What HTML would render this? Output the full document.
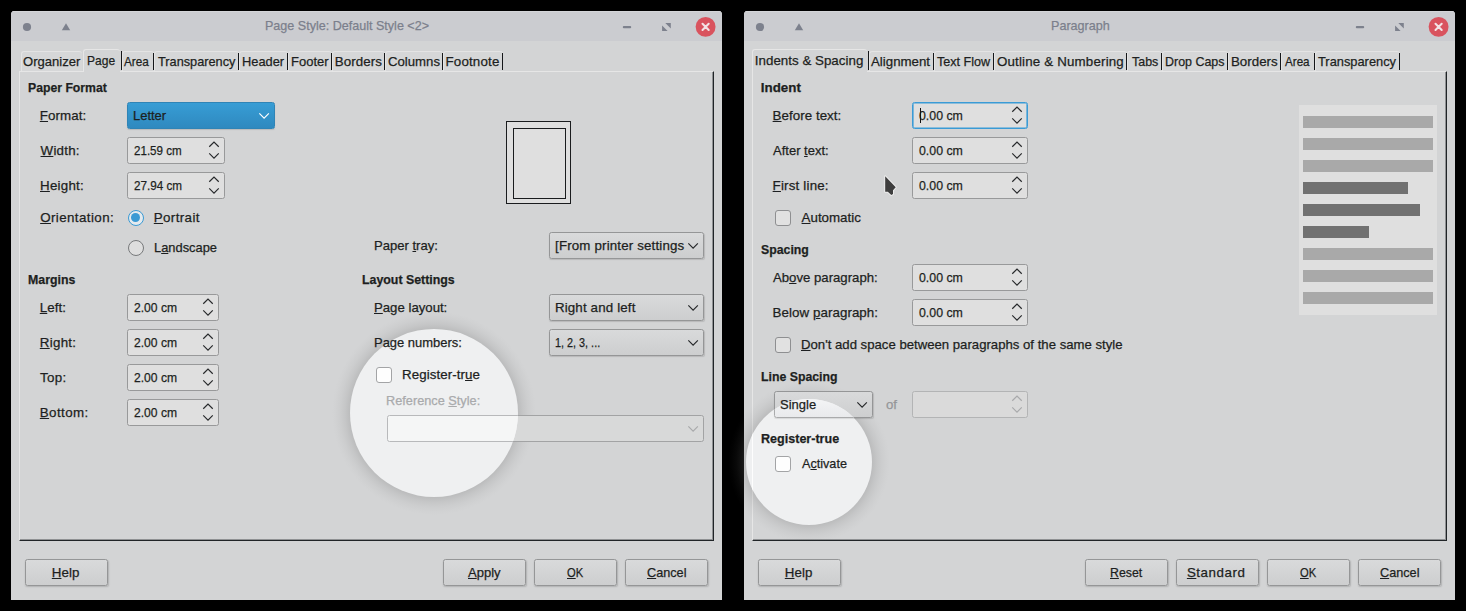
<!DOCTYPE html>
<html><head><meta charset="utf-8"><title>Dialogs</title>
<style>
html,body{margin:0;padding:0}
body{width:1466px;height:611px;background:#000;position:relative;overflow:hidden;font-family:"Liberation Sans",sans-serif;font-size:13.33px}
.t{position:absolute;white-space:nowrap;z-index:5;transform-origin:0 0;-webkit-text-stroke:0.25px currentColor}
.t u{text-decoration:underline;text-decoration-thickness:1px;text-underline-offset:1.2px}
.win{position:absolute;top:11px;width:711px;height:589px;background:#d3d4d5;border-radius:3.5px 3.5px 0 0;overflow:hidden;z-index:0}
.tb{height:30px;background:#cbccd0;box-shadow:inset 0 1px 0 #d4d5d8}
div{box-sizing:border-box}
.panel{position:absolute;z-index:1;border-top:1px solid #e6e6e6;border-left:1px solid #e6e6e6;border-right:1px solid #202427;border-bottom:1px solid #202427;box-shadow:inset -1px -1px 0 rgba(32,36,39,0.38)}
.halo{position:absolute;z-index:2;border-radius:50%}
.spot{position:absolute;z-index:4;border-radius:50%;background:#eff0f1;overflow:hidden}
.chk.lit{background:#fefefe;border-color:#a3a4a6}
.combo.lit{border-color:#aaabac;background:linear-gradient(#f7f8f9,#e9eaec);box-shadow:0.5px 1px 1px rgba(0,0,0,0.10)}
.combo.dis.lit{background:#f5f6f6;border-color:#b8b9bb;box-shadow:none}
.vline{position:absolute;background:#fdfdfd}
.tab{position:absolute;z-index:3;border-top:1px solid #e4e4e4;border-left:1px solid #e4e4e4;border-radius:3px 3px 0 0;background:#d6d7d8}
.tab:after{content:"";position:absolute;right:0;top:1px;bottom:1px;width:1px;background:#15171a}
.tab.nl:after{display:none}
.tab.sel{background:#d3d4d5;border-top:1px solid #e6e6e6;border-left:1px solid #e6e6e6;z-index:4}
.tab.sel:after{top:1px;bottom:2px;width:1.2px;right:-1.8px}
.spin{position:absolute;z-index:3;background:#dfdfdf;border:1px solid #98999a;border-radius:2.5px}
.spin.foc{border-color:#3a9bd6;box-shadow:inset 0 0 0 0.6px #3a9bd6}
.spin.dis{background:#dadada;border-color:#b3b4b5}
.combo{position:absolute;z-index:3;border:1px solid #959697;border-radius:2.5px;background:linear-gradient(#d9dadb,#cdcecf);box-shadow:0.5px 1px 1px rgba(0,0,0,0.13)}
.combo.blue{border-color:#2f84b6;background:linear-gradient(#379dd5,#2f89bf);box-shadow:0 1px 1px rgba(0,0,0,0.12)}
.combo.dis{background:#d8d9d9;border-color:#a2a3a4;box-shadow:none}
.btn{position:absolute;z-index:3;border:1px solid #959697;border-radius:2.5px;background:linear-gradient(#d9dadb,#cdcecf);box-shadow:0.5px 1px 1.5px rgba(0,0,0,0.16)}
.chk{position:absolute;z-index:3;border:1px solid #8e8f91;border-radius:3px;background:#e1e1e1}
.radio{position:absolute;z-index:3;width:16px;height:16px;border-radius:50%;border:1px solid #77797b;background:#dedede}
.radio.on{border:1.3px solid #3a9ad4;background:#e4eaee}
.radio.on:after{content:"";position:absolute;left:2.1px;top:2.1px;width:9.2px;height:9.2px;border-radius:50%;background:#3a9ad4}
.pv1,.pv2{position:absolute;z-index:3;border:1px solid #1a1c1e;background:#dfdfdf}
.ppv{position:absolute;z-index:3;background:#dfdfdf}
.bar{position:absolute;z-index:4;background:#a9a9a9}
.bar.d{background:#717171}
.caret{position:absolute;z-index:6;width:1.6px;height:15px;background:#111}
svg.ov{position:absolute;left:0;top:0;z-index:7;pointer-events:none}
</style></head>
<body>
<div class="win" style="left:11px"><div class="tb"></div></div>
<div class="panel" style="left:19px;top:71px;width:695px;height:470px;"></div>
<div class="halo" style="left:331.9px;top:310.9px;width:204.2px;height:204.2px;background:radial-gradient(circle closest-side, rgba(120,120,120,0) 81.39%, rgba(120,120,120,0.27) 81.88%, rgba(120,120,120,0.26) 82.37%, rgba(120,120,120,0.15) 87.27%, rgba(120,120,120,0.07) 92.16%, rgba(120,120,120,0.02) 97.06%, rgba(120,120,120,0) 100%)"></div>
<div class="spot" style="left:349.9px;top:328.9px;width:168.2px;height:168.2px"><div style="position:absolute;left:-349.9px;top:-328.9px;width:0;height:0"><div class="chk lit" style="left:376px;top:367px;width:16px;height:16px"></div><div class="combo dis lit" style="left:387px;top:415px;width:317px;height:27px"></div></div></div>
<div class="tab nl" style="left:21px;top:51px;width:61px;height:20px;"></div>
<span class="t" style="left:23.18px;top:55.13px;font-size:13.33px;line-height:13.33px;letter-spacing:0.000px;color:#1d1f21;transform:scaleX(0.9784);">Organizer</span>
<div class="tab sel" style="left:83px;top:49px;width:37px;height:23px;"></div>
<span class="t" style="left:86.81px;top:54.13px;font-size:13.33px;line-height:13.33px;letter-spacing:0.000px;color:#1d1f21;transform:scaleX(0.9022);">Page</span>
<div class="tab" style="left:122px;top:51px;width:32px;height:20px;"></div>
<span class="t" style="left:124.38px;top:55.13px;font-size:13.33px;line-height:13.33px;letter-spacing:0.000px;color:#1d1f21;transform:scaleX(0.8840);">Area</span>
<div class="tab" style="left:154px;top:51px;width:85px;height:20px;"></div>
<span class="t" style="left:157.91px;top:55.13px;font-size:13.33px;line-height:13.33px;letter-spacing:0.000px;color:#1d1f21;transform:scaleX(0.9557);">Transparency</span>
<div class="tab" style="left:239px;top:51px;width:49px;height:20px;"></div>
<span class="t" style="left:241.95px;top:55.13px;font-size:13.33px;line-height:13.33px;letter-spacing:0.000px;color:#1d1f21;transform:scaleX(0.9633);">Header</span>
<div class="tab" style="left:288px;top:51px;width:44px;height:20px;"></div>
<span class="t" style="left:290.93px;top:55.13px;font-size:13.33px;line-height:13.33px;letter-spacing:0.000px;color:#1d1f21;transform:scaleX(0.9743);">Footer</span>
<div class="tab" style="left:332px;top:51px;width:53px;height:20px;"></div>
<span class="t" style="left:334.71px;top:55.13px;font-size:13.33px;line-height:13.33px;letter-spacing:0.107px;color:#1d1f21;">Borders</span>
<div class="tab" style="left:385px;top:51px;width:58px;height:20px;"></div>
<span class="t" style="left:388.03px;top:55.13px;font-size:13.33px;line-height:13.33px;letter-spacing:0.000px;color:#1d1f21;transform:scaleX(0.9882);">Columns</span>
<div class="tab" style="left:443px;top:51px;width:60px;height:20px;"></div>
<span class="t" style="left:445.51px;top:55.13px;font-size:13.33px;line-height:13.33px;letter-spacing:0.172px;color:#1d1f21;">Footnote</span>
<span class="t" style="left:264.97px;top:19.13px;font-size:13.33px;line-height:13.33px;letter-spacing:0.000px;color:#7b7f8c;transform:scaleX(0.9420);">Page Style: Default Style &lt;2&gt;</span>
<span class="t" style="left:27.78px;top:81.13px;font-size:13.33px;line-height:13.33px;letter-spacing:0.000px;color:#1d1f21;font-weight:bold;transform:scaleX(0.9178);">Paper Format</span>
<span class="t" style="left:39.81px;top:109.13px;font-size:13.33px;line-height:13.33px;letter-spacing:0.089px;color:#1d1f21;"><u>F</u>ormat:</span>
<div class="combo blue" style="left:127px;top:102px;width:148px;height:27px;"></div>
<span class="t" style="left:132.94px;top:109.13px;font-size:13.33px;line-height:13.33px;letter-spacing:0.000px;color:#1d1f21;transform:scaleX(0.9721);">Letter</span>
<span class="t" style="left:40.54px;top:144.13px;font-size:13.33px;line-height:13.33px;letter-spacing:0.250px;color:#1d1f21;"><u>W</u>idth:</span>
<div class="spin" style="left:127px;top:137px;width:98px;height:27px;"></div>
<span class="t" style="left:133.82px;top:144.13px;font-size:13.33px;line-height:13.33px;letter-spacing:0.000px;color:#1d1f21;transform:scaleX(0.8697);">21.59 cm</span>
<span class="t" style="left:40.01px;top:179.13px;font-size:13.33px;line-height:13.33px;letter-spacing:0.254px;color:#1d1f21;"><u>H</u>eight:</span>
<div class="spin" style="left:127px;top:172px;width:98px;height:27px;"></div>
<span class="t" style="left:133.81px;top:179.13px;font-size:13.33px;line-height:13.33px;letter-spacing:0.000px;color:#1d1f21;transform:scaleX(0.8772);">27.94 cm</span>
<span class="t" style="left:40.17px;top:211.13px;font-size:13.33px;line-height:13.33px;letter-spacing:0.423px;color:#1d1f21;"><u>O</u>rientation:</span>
<div class="radio on" style="left:128px;top:210px"></div>
<span class="t" style="left:153.81px;top:211.13px;font-size:13.33px;line-height:13.33px;letter-spacing:0.382px;color:#1d1f21;"><u>P</u>ortrait</span>
<div class="radio" style="left:128px;top:240px"></div>
<span class="t" style="left:153.84px;top:241.13px;font-size:13.33px;line-height:13.33px;letter-spacing:0.000px;color:#1d1f21;transform:scaleX(0.9651);">L<u>a</u>ndscape</span>
<span class="t" style="left:27.78px;top:273.13px;font-size:13.33px;line-height:13.33px;letter-spacing:0.000px;color:#1d1f21;font-weight:bold;transform:scaleX(0.9250);">Margins</span>
<span class="t" style="left:39.81px;top:301.13px;font-size:13.33px;line-height:13.33px;letter-spacing:0.060px;color:#1d1f21;"><u>L</u>eft:</span>
<div class="spin" style="left:127px;top:294px;width:92px;height:27px;"></div>
<span class="t" style="left:133.79px;top:301.13px;font-size:13.33px;line-height:13.33px;letter-spacing:0.000px;color:#1d1f21;transform:scaleX(0.9080);">2.00 cm</span>
<span class="t" style="left:39.81px;top:336.13px;font-size:13.33px;line-height:13.33px;letter-spacing:0.289px;color:#1d1f21;"><u>R</u>ight:</span>
<div class="spin" style="left:127px;top:329px;width:92px;height:27px;"></div>
<span class="t" style="left:133.79px;top:336.13px;font-size:13.33px;line-height:13.33px;letter-spacing:0.000px;color:#1d1f21;transform:scaleX(0.9080);">2.00 cm</span>
<span class="t" style="left:40.10px;top:371.13px;font-size:13.33px;line-height:13.33px;letter-spacing:0.330px;color:#1d1f21;">Top:</span>
<div class="spin" style="left:127px;top:364px;width:92px;height:27px;"></div>
<span class="t" style="left:133.79px;top:371.13px;font-size:13.33px;line-height:13.33px;letter-spacing:0.000px;color:#1d1f21;transform:scaleX(0.9080);">2.00 cm</span>
<span class="t" style="left:39.81px;top:406.13px;font-size:13.33px;line-height:13.33px;letter-spacing:0.420px;color:#1d1f21;"><u>B</u>ottom:</span>
<div class="spin" style="left:127px;top:399px;width:92px;height:27px;"></div>
<span class="t" style="left:133.79px;top:406.13px;font-size:13.33px;line-height:13.33px;letter-spacing:0.000px;color:#1d1f21;transform:scaleX(0.9080);">2.00 cm</span>
<div class="pv1" style="left:506px;top:121px;width:65px;height:83px;"></div>
<div class="pv2" style="left:513px;top:128px;width:53px;height:71px;"></div>
<span class="t" style="left:373.83px;top:239.13px;font-size:13.33px;line-height:13.33px;letter-spacing:0.000px;color:#1d1f21;transform:scaleX(0.9798);">Paper <u>t</u>ray:</span>
<div class="combo" style="left:549px;top:232px;width:155px;height:27px;"></div>
<span class="t" style="left:555.05px;top:239.13px;font-size:13.33px;line-height:13.33px;letter-spacing:0.154px;color:#1d1f21;">[From printer settings</span>
<span class="t" style="left:361.97px;top:273.13px;font-size:13.33px;line-height:13.33px;letter-spacing:0.000px;color:#1d1f21;font-weight:bold;transform:scaleX(0.9274);">Layout Settings</span>
<span class="t" style="left:373.82px;top:301.13px;font-size:13.33px;line-height:13.33px;letter-spacing:0.000px;color:#1d1f21;transform:scaleX(0.9890);"><u>P</u>age layout:</span>
<div class="combo" style="left:549px;top:294px;width:155px;height:27px;"></div>
<span class="t" style="left:554.91px;top:301.13px;font-size:13.33px;line-height:13.33px;letter-spacing:0.150px;color:#1d1f21;">Right and left</span>
<span class="t" style="left:373.84px;top:336.13px;font-size:13.33px;line-height:13.33px;letter-spacing:0.000px;color:#1d1f21;transform:scaleX(0.9716);">Pa<u>g</u>e numbers:</span>
<div class="combo" style="left:549px;top:329px;width:155px;height:27px;"></div>
<span class="t" style="left:555.17px;top:336.13px;font-size:13.33px;line-height:13.33px;letter-spacing:0.000px;color:#1d1f21;transform:scaleX(0.8126);">1, 2, 3, ...</span>
<div class="chk" style="left:376px;top:367px;width:16px;height:16px;"></div>
<span class="t" style="left:402.11px;top:368.13px;font-size:13.33px;line-height:13.33px;letter-spacing:0.062px;color:#1d1f21;">Register-tr<u>u</u>e</span>
<span class="t" style="left:386.45px;top:394.13px;font-size:13.33px;line-height:13.33px;letter-spacing:0.000px;color:#a9aaac;transform:scaleX(0.9558);">Reference <u>S</u>tyle:</span>
<div class="combo dis" style="left:387px;top:415px;width:317px;height:27px;"></div>
<div class="btn" style="left:25px;top:559px;width:83px;height:27px;"></div>
<span class="t" style="left:51.81px;top:566.13px;font-size:13.33px;line-height:13.33px;letter-spacing:0.035px;color:#1d1f21;"><u>H</u>elp</span>
<div class="btn" style="left:443px;top:559px;width:83px;height:27px;"></div>
<span class="t" style="left:468.17px;top:566.13px;font-size:13.33px;line-height:13.33px;letter-spacing:0.000px;color:#1d1f21;transform:scaleX(0.9780);"><u>A</u>pply</span>
<div class="btn" style="left:534px;top:559px;width:83px;height:27px;"></div>
<span class="t" style="left:567.07px;top:566.13px;font-size:13.33px;line-height:13.33px;letter-spacing:0.000px;color:#1d1f21;transform:scaleX(0.8377);"><u>O</u>K</span>
<div class="btn" style="left:625px;top:559px;width:83px;height:27px;"></div>
<span class="t" style="left:646.76px;top:566.13px;font-size:13.33px;line-height:13.33px;letter-spacing:0.000px;color:#1d1f21;transform:scaleX(0.9505);"><u>C</u>ancel</span>
<div class="win" style="left:744px"><div class="tb"></div></div>
<div class="panel" style="left:752px;top:71px;width:695px;height:470px;"></div>
<div class="halo" style="left:728px;top:381.2px;width:162px;height:162px;background:radial-gradient(circle closest-side, rgba(120,120,120,0) 76.54%, rgba(120,120,120,0.27) 77.16%, rgba(120,120,120,0.26) 77.78%, rgba(120,120,120,0.15) 83.95%, rgba(120,120,120,0.07) 90.12%, rgba(120,120,120,0.02) 96.30%, rgba(120,120,120,0) 100%)"></div>
<div class="spot" style="left:746px;top:399.2px;width:126px;height:126px"><div style="position:absolute;left:-746px;top:-399.2px;width:0;height:0"><div class="vline" style="left:752px;top:380px;width:1px;height:160px"></div><div class="combo lit" style="left:774px;top:391px;width:99px;height:27px"></div><div class="chk lit" style="left:775px;top:456px;width:16px;height:16px"></div></div></div>
<div class="tab sel" style="left:752px;top:49px;width:115px;height:23px;"></div>
<span class="t" style="left:754.87px;top:54.13px;font-size:13.33px;line-height:13.33px;letter-spacing:0.016px;color:#1d1f21;">Indents &amp; Spacing</span>
<div class="tab" style="left:869px;top:51px;width:65px;height:20px;"></div>
<span class="t" style="left:870.57px;top:55.13px;font-size:13.33px;line-height:13.33px;letter-spacing:0.000px;color:#1d1f21;transform:scaleX(0.9962);">Alignment</span>
<div class="tab" style="left:934px;top:51px;width:60px;height:20px;"></div>
<span class="t" style="left:937.42px;top:55.13px;font-size:13.33px;line-height:13.33px;letter-spacing:0.000px;color:#1d1f21;transform:scaleX(0.9430);">Text Flow</span>
<div class="tab" style="left:994px;top:51px;width:133px;height:20px;"></div>
<span class="t" style="left:996.97px;top:55.13px;font-size:13.33px;line-height:13.33px;letter-spacing:0.172px;color:#1d1f21;">Outline &amp; Numbering</span>
<div class="tab" style="left:1127px;top:51px;width:35px;height:20px;"></div>
<span class="t" style="left:1131.72px;top:55.13px;font-size:13.33px;line-height:13.33px;letter-spacing:0.000px;color:#1d1f21;transform:scaleX(0.9339);">Tabs</span>
<div class="tab" style="left:1162px;top:51px;width:66px;height:20px;"></div>
<span class="t" style="left:1165.08px;top:55.13px;font-size:13.33px;line-height:13.33px;letter-spacing:0.000px;color:#1d1f21;transform:scaleX(0.9338);">Drop Caps</span>
<div class="tab" style="left:1228px;top:51px;width:53px;height:20px;"></div>
<span class="t" style="left:1230.91px;top:55.13px;font-size:13.33px;line-height:13.33px;letter-spacing:0.024px;color:#1d1f21;">Borders</span>
<div class="tab" style="left:1281px;top:51px;width:34px;height:20px;"></div>
<span class="t" style="left:1285.28px;top:55.13px;font-size:13.33px;line-height:13.33px;letter-spacing:0.000px;color:#1d1f21;transform:scaleX(0.8734);">Area</span>
<div class="tab" style="left:1315px;top:51px;width:85px;height:20px;"></div>
<span class="t" style="left:1318.31px;top:55.13px;font-size:13.33px;line-height:13.33px;letter-spacing:0.000px;color:#1d1f21;transform:scaleX(0.9631);">Transparency</span>
<span class="t" style="left:1050.67px;top:19.13px;font-size:13.33px;line-height:13.33px;letter-spacing:0.000px;color:#7b7f8c;transform:scaleX(0.9442);">Paragraph</span>
<span class="t" style="left:760.71px;top:81.13px;font-size:13.33px;line-height:13.33px;letter-spacing:0.044px;color:#1d1f21;font-weight:bold;">Indent</span>
<span class="t" style="left:772.61px;top:109.13px;font-size:13.33px;line-height:13.33px;letter-spacing:0.042px;color:#1d1f21;"><u>B</u>efore text:</span>
<div class="spin foc" style="left:912px;top:102px;width:116px;height:27px;"></div>
<span class="t" style="left:918.92px;top:109.13px;font-size:13.33px;line-height:13.33px;letter-spacing:0.000px;color:#1d1f21;transform:scaleX(0.9245);">0.00 cm</span>
<div class="caret" style="left:919.8px;top:108.3px"></div>
<span class="t" style="left:773.27px;top:144.13px;font-size:13.33px;line-height:13.33px;letter-spacing:0.000px;color:#1d1f21;transform:scaleX(0.9755);">After <u>t</u>ext:</span>
<div class="spin" style="left:912px;top:137px;width:116px;height:27px;"></div>
<span class="t" style="left:918.92px;top:144.13px;font-size:13.33px;line-height:13.33px;letter-spacing:0.000px;color:#1d1f21;transform:scaleX(0.9245);">0.00 cm</span>
<span class="t" style="left:772.61px;top:179.13px;font-size:13.33px;line-height:13.33px;letter-spacing:0.188px;color:#1d1f21;"><u>F</u>irst line:</span>
<div class="spin" style="left:912px;top:172px;width:116px;height:27px;"></div>
<span class="t" style="left:918.92px;top:179.13px;font-size:13.33px;line-height:13.33px;letter-spacing:0.000px;color:#1d1f21;transform:scaleX(0.9245);">0.00 cm</span>
<div class="chk" style="left:775px;top:210px;width:16px;height:16px;"></div>
<span class="t" style="left:801.57px;top:211.13px;font-size:13.33px;line-height:13.33px;letter-spacing:0.004px;color:#1d1f21;"><u>A</u>utomatic</span>
<span class="t" style="left:760.95px;top:243.13px;font-size:13.33px;line-height:13.33px;letter-spacing:0.000px;color:#1d1f21;font-weight:bold;transform:scaleX(0.9222);">Spacing</span>
<span class="t" style="left:773.27px;top:271.13px;font-size:13.33px;line-height:13.33px;letter-spacing:0.000px;color:#1d1f21;transform:scaleX(0.9879);">Ab<u>o</u>ve paragraph:</span>
<div class="spin" style="left:912px;top:264px;width:116px;height:27px;"></div>
<span class="t" style="left:918.92px;top:271.13px;font-size:13.33px;line-height:13.33px;letter-spacing:0.000px;color:#1d1f21;transform:scaleX(0.9245);">0.00 cm</span>
<span class="t" style="left:772.61px;top:306.13px;font-size:13.33px;line-height:13.33px;letter-spacing:0.060px;color:#1d1f21;">Below <u>p</u>aragraph:</span>
<div class="spin" style="left:912px;top:299px;width:116px;height:27px;"></div>
<span class="t" style="left:918.92px;top:306.13px;font-size:13.33px;line-height:13.33px;letter-spacing:0.000px;color:#1d1f21;transform:scaleX(0.9245);">0.00 cm</span>
<div class="chk" style="left:775px;top:337px;width:16px;height:16px;"></div>
<span class="t" style="left:800.82px;top:338.13px;font-size:13.33px;line-height:13.33px;letter-spacing:0.000px;color:#1d1f21;transform:scaleX(0.9875);"><u>D</u>on&#x27;t add space between paragraphs of the same style</span>
<span class="t" style="left:760.78px;top:370.13px;font-size:13.33px;line-height:13.33px;letter-spacing:0.000px;color:#1d1f21;font-weight:bold;transform:scaleX(0.9228);">Line Spacing</span>
<div class="combo" style="left:774px;top:391px;width:99px;height:27px;"></div>
<span class="t" style="left:780.41px;top:398.13px;font-size:13.33px;line-height:13.33px;letter-spacing:0.000px;color:#1d1f21;transform:scaleX(0.9749);">Single</span>
<span class="t" style="left:886.35px;top:398.13px;font-size:13.33px;line-height:13.33px;letter-spacing:0.000px;color:#959698;transform:scaleX(0.9914);">of</span>
<div class="spin dis" style="left:912px;top:391px;width:116px;height:27px;"></div>
<span class="t" style="left:760.76px;top:432.13px;font-size:13.33px;line-height:13.33px;letter-spacing:0.000px;color:#1d1f21;font-weight:bold;transform:scaleX(0.9423);">Register-true</span>
<div class="chk" style="left:775px;top:456px;width:16px;height:16px;"></div>
<span class="t" style="left:801.58px;top:457.13px;font-size:13.33px;line-height:13.33px;letter-spacing:0.000px;color:#1d1f21;transform:scaleX(0.9475);">A<u>c</u>tivate</span>
<div class="ppv" style="left:1299px;top:105px;width:138px;height:210px;"></div>
<div class="bar" style="left:1303px;top:116px;width:130px;height:12px;"></div>
<div class="bar" style="left:1303px;top:138px;width:130px;height:12px;"></div>
<div class="bar" style="left:1303px;top:160px;width:130px;height:12px;"></div>
<div class="bar d" style="left:1303px;top:182px;width:105px;height:12px;"></div>
<div class="bar d" style="left:1303px;top:204px;width:117px;height:12px;"></div>
<div class="bar d" style="left:1303px;top:226px;width:66px;height:12px;"></div>
<div class="bar" style="left:1303px;top:248px;width:130px;height:12px;"></div>
<div class="bar" style="left:1303px;top:270px;width:130px;height:12px;"></div>
<div class="bar" style="left:1303px;top:292px;width:130px;height:12px;"></div>
<div class="btn" style="left:758px;top:559px;width:83px;height:27px;"></div>
<span class="t" style="left:784.81px;top:566.13px;font-size:13.33px;line-height:13.33px;letter-spacing:0.035px;color:#1d1f21;"><u>H</u>elp</span>
<div class="btn" style="left:1085px;top:559px;width:83px;height:27px;"></div>
<span class="t" style="left:1109.79px;top:566.13px;font-size:13.33px;line-height:13.33px;letter-spacing:0.000px;color:#1d1f21;transform:scaleX(0.9235);"><u>R</u>eset</span>
<div class="btn" style="left:1176px;top:559px;width:83px;height:27px;"></div>
<span class="t" style="left:1186.89px;top:566.13px;font-size:13.33px;line-height:13.33px;letter-spacing:0.571px;color:#1d1f21;"><u>S</u>tandard</span>
<div class="btn" style="left:1267px;top:559px;width:83px;height:27px;"></div>
<span class="t" style="left:1300.07px;top:566.13px;font-size:13.33px;line-height:13.33px;letter-spacing:0.000px;color:#1d1f21;transform:scaleX(0.8377);"><u>O</u>K</span>
<div class="btn" style="left:1358px;top:559px;width:83px;height:27px;"></div>
<span class="t" style="left:1379.76px;top:566.13px;font-size:13.33px;line-height:13.33px;letter-spacing:0.000px;color:#1d1f21;transform:scaleX(0.9505);"><u>C</u>ancel</span>
<svg class="ov" width="1466" height="611" viewBox="0 0 1466 611"><circle cx="27" cy="27" r="4.1" fill="#7d818d"/>
<path d="M61.8 30.2 L66 23.3 L70.2 30.2 Z" fill="#7d818d"/>
<rect x="622.8" y="25.9" width="8.4" height="2.3" rx="1" fill="#7d818d"/>
<path d="M665.3 23 L670.8 23 L670.8 28.5 Z M662.1 25.4 L662.1 30.9 L667.6 30.9 Z" fill="#7d818d"/>
<circle cx="705.6" cy="26.85" r="9.95" fill="#d9535e"/>
<path d="M702.5 23.8 L708.7 30 M708.7 23.8 L702.5 30" stroke="#f3e3e5" stroke-width="2.05" stroke-linecap="round"/>
<path d="M259.35 113.40 L264.10 118.15 L268.85 113.40" fill="none" stroke="#ffffff" stroke-width="1.15" stroke-linecap="butt" stroke-linejoin="miter"/>
<path d="M209.25 146.75 L214.00 142.00 L218.75 146.75" fill="none" stroke="#26282a" stroke-width="1.15" stroke-linecap="butt" stroke-linejoin="miter"/>
<path d="M209.25 153.40 L214.00 158.15 L218.75 153.40" fill="none" stroke="#26282a" stroke-width="1.15" stroke-linecap="butt" stroke-linejoin="miter"/>
<path d="M209.25 181.75 L214.00 177.00 L218.75 181.75" fill="none" stroke="#26282a" stroke-width="1.15" stroke-linecap="butt" stroke-linejoin="miter"/>
<path d="M209.25 188.40 L214.00 193.15 L218.75 188.40" fill="none" stroke="#26282a" stroke-width="1.15" stroke-linecap="butt" stroke-linejoin="miter"/>
<path d="M203.25 303.75 L208.00 299.00 L212.75 303.75" fill="none" stroke="#26282a" stroke-width="1.15" stroke-linecap="butt" stroke-linejoin="miter"/>
<path d="M203.25 310.40 L208.00 315.15 L212.75 310.40" fill="none" stroke="#26282a" stroke-width="1.15" stroke-linecap="butt" stroke-linejoin="miter"/>
<path d="M203.25 338.75 L208.00 334.00 L212.75 338.75" fill="none" stroke="#26282a" stroke-width="1.15" stroke-linecap="butt" stroke-linejoin="miter"/>
<path d="M203.25 345.40 L208.00 350.15 L212.75 345.40" fill="none" stroke="#26282a" stroke-width="1.15" stroke-linecap="butt" stroke-linejoin="miter"/>
<path d="M203.25 373.75 L208.00 369.00 L212.75 373.75" fill="none" stroke="#26282a" stroke-width="1.15" stroke-linecap="butt" stroke-linejoin="miter"/>
<path d="M203.25 380.40 L208.00 385.15 L212.75 380.40" fill="none" stroke="#26282a" stroke-width="1.15" stroke-linecap="butt" stroke-linejoin="miter"/>
<path d="M203.25 408.75 L208.00 404.00 L212.75 408.75" fill="none" stroke="#26282a" stroke-width="1.15" stroke-linecap="butt" stroke-linejoin="miter"/>
<path d="M203.25 415.40 L208.00 420.15 L212.75 415.40" fill="none" stroke="#26282a" stroke-width="1.15" stroke-linecap="butt" stroke-linejoin="miter"/>
<path d="M688.35 243.40 L693.10 248.15 L697.85 243.40" fill="none" stroke="#26282a" stroke-width="1.15" stroke-linecap="butt" stroke-linejoin="miter"/>
<path d="M688.35 305.40 L693.10 310.15 L697.85 305.40" fill="none" stroke="#26282a" stroke-width="1.15" stroke-linecap="butt" stroke-linejoin="miter"/>
<path d="M688.35 340.40 L693.10 345.15 L697.85 340.40" fill="none" stroke="#26282a" stroke-width="1.15" stroke-linecap="butt" stroke-linejoin="miter"/>
<path d="M688.35 426.40 L693.10 431.15 L697.85 426.40" fill="none" stroke="#a8a9ab" stroke-width="1.15" stroke-linecap="butt" stroke-linejoin="miter"/>
<circle cx="760" cy="27" r="4.1" fill="#7d818d"/>
<path d="M794.8 30.2 L799 23.3 L803.2 30.2 Z" fill="#7d818d"/>
<rect x="1355.8" y="25.9" width="8.4" height="2.3" rx="1" fill="#7d818d"/>
<path d="M1398.3 23 L1403.8 23 L1403.8 28.5 Z M1395.1 25.4 L1395.1 30.9 L1400.6 30.9 Z" fill="#7d818d"/>
<circle cx="1438.6" cy="26.85" r="9.95" fill="#d9535e"/>
<path d="M1435.5 23.8 L1441.7 30 M1441.7 23.8 L1435.5 30" stroke="#f3e3e5" stroke-width="2.05" stroke-linecap="round"/>
<path d="M1012.25 111.75 L1017.00 107.00 L1021.75 111.75" fill="none" stroke="#26282a" stroke-width="1.15" stroke-linecap="butt" stroke-linejoin="miter"/>
<path d="M1012.25 118.40 L1017.00 123.15 L1021.75 118.40" fill="none" stroke="#26282a" stroke-width="1.15" stroke-linecap="butt" stroke-linejoin="miter"/>
<path d="M1012.25 146.75 L1017.00 142.00 L1021.75 146.75" fill="none" stroke="#26282a" stroke-width="1.15" stroke-linecap="butt" stroke-linejoin="miter"/>
<path d="M1012.25 153.40 L1017.00 158.15 L1021.75 153.40" fill="none" stroke="#26282a" stroke-width="1.15" stroke-linecap="butt" stroke-linejoin="miter"/>
<path d="M1012.25 181.75 L1017.00 177.00 L1021.75 181.75" fill="none" stroke="#26282a" stroke-width="1.15" stroke-linecap="butt" stroke-linejoin="miter"/>
<path d="M1012.25 188.40 L1017.00 193.15 L1021.75 188.40" fill="none" stroke="#26282a" stroke-width="1.15" stroke-linecap="butt" stroke-linejoin="miter"/>
<path d="M1012.25 273.75 L1017.00 269.00 L1021.75 273.75" fill="none" stroke="#26282a" stroke-width="1.15" stroke-linecap="butt" stroke-linejoin="miter"/>
<path d="M1012.25 280.40 L1017.00 285.15 L1021.75 280.40" fill="none" stroke="#26282a" stroke-width="1.15" stroke-linecap="butt" stroke-linejoin="miter"/>
<path d="M1012.25 308.75 L1017.00 304.00 L1021.75 308.75" fill="none" stroke="#26282a" stroke-width="1.15" stroke-linecap="butt" stroke-linejoin="miter"/>
<path d="M1012.25 315.40 L1017.00 320.15 L1021.75 315.40" fill="none" stroke="#26282a" stroke-width="1.15" stroke-linecap="butt" stroke-linejoin="miter"/>
<path d="M857.35 402.40 L862.10 407.15 L866.85 402.40" fill="none" stroke="#26282a" stroke-width="1.15" stroke-linecap="butt" stroke-linejoin="miter"/>
<path d="M1012.25 400.75 L1017.00 396.00 L1021.75 400.75" fill="none" stroke="#a8a9ab" stroke-width="1.15" stroke-linecap="butt" stroke-linejoin="miter"/>
<path d="M1012.25 407.40 L1017.00 412.15 L1021.75 407.40" fill="none" stroke="#a8a9ab" stroke-width="1.15" stroke-linecap="butt" stroke-linejoin="miter"/>
<path d="M885.2 176.3 L895.7 187.3 L893 190.2 L893 194.1 L891.3 194.9 L887.8 191.7 L885.2 191.7 Z" fill="#3e3e3e" stroke="rgba(238,238,238,0.9)" stroke-width="2" stroke-linejoin="round" paint-order="stroke"/></svg>
</body></html>
